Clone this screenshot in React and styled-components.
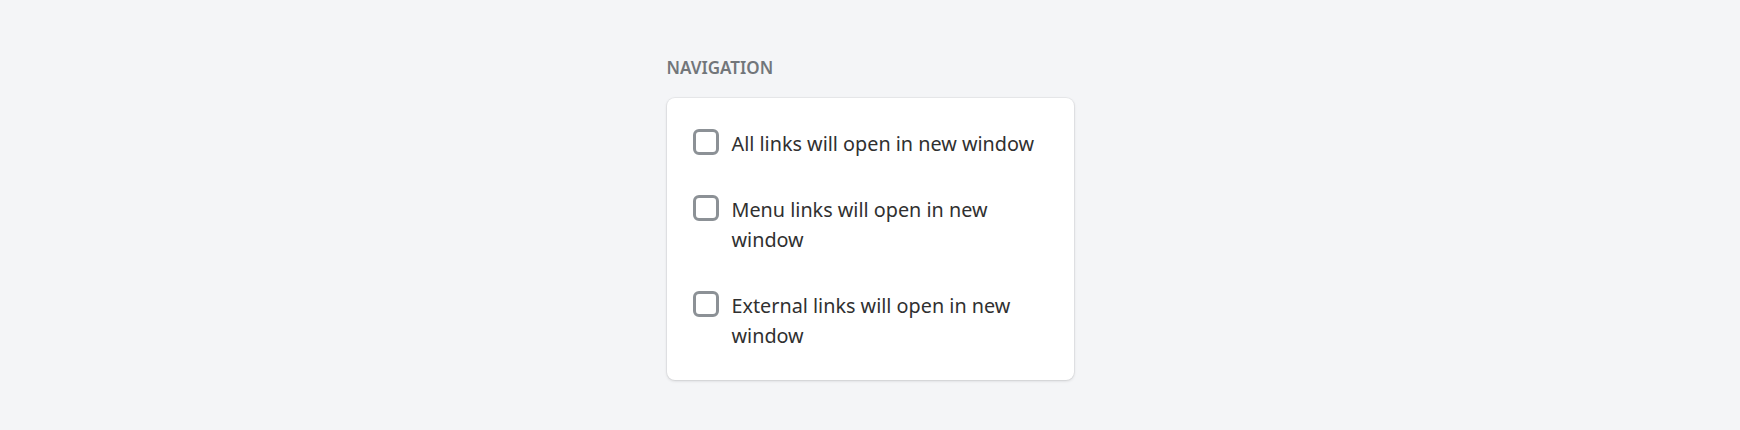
import React from "react";
import styled, { createGlobalStyle } from "styled-components";

const Global = createGlobalStyle`
  html, body { margin: 0; padding: 0; background: #f4f5f7; }
  body { font-family: "Noto Sans", "Open Sans", sans-serif; }
`;

const Page = styled.div`
  width: 1740px;
  height: 430px;
  display: flex;
  justify-content: center;
  box-sizing: border-box;
  padding-top: 56px;
`;

const Section = styled.section`
  width: 407px;
  display: flex;
  flex-direction: column;
`;

const Heading = styled.h2`
  margin: 0 0 18px 0;
  font-size: 17px;
  line-height: 24px;
  font-weight: 600;
  color: #72767a;
  letter-spacing: 0;
`;

const Card = styled.div`
  background: #ffffff;
  border-radius: 8px;
  box-shadow: 0 0 0 1px rgba(63, 63, 68, 0.05), 0 1px 3px 0 rgba(63, 63, 68, 0.18);
  padding: 28px 26px 29px 26px;
  display: flex;
  flex-direction: column;
  gap: 33px;
`;

const Row = styled.label`
  display: flex;
  align-items: flex-start;
  gap: 13px;
  cursor: pointer;
`;

const Box = styled.span`
  flex: none;
  width: 26px;
  height: 26px;
  box-sizing: border-box;
  border: 3px solid #8c9196;
  border-radius: 6px;
  margin-top: 3px;
  background: #fff;
`;

const Text = styled.span`
  padding-top: 3px;
  font-size: 19.8px;
  line-height: 30px;
  color: #303030;
`;

const items = [
  "All links will open in new window",
  "Menu links will open in new window",
  "External links will open in new window",
];

export default function App() {
  return (
    <>
      <Global />
      <Page>
        <Section>
          <Heading>NAVIGATION</Heading>
          <Card>
            {items.map((t) => (
              <Row key={t}>
                <Box />
                <Text>{t}</Text>
              </Row>
            ))}
          </Card>
        </Section>
      </Page>
    </>
  );
}
